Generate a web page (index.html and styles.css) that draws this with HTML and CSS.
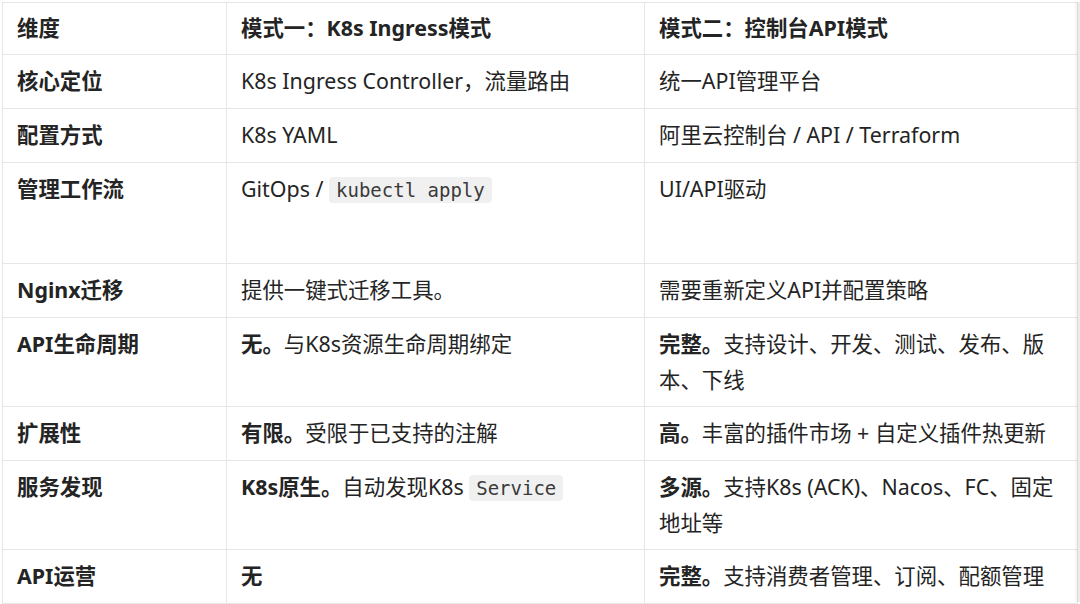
FILE: index.html
```html
<!DOCTYPE html>
<html lang="zh-CN">
<head>
<meta charset="utf-8">
<link rel="stylesheet" href="styles.css">
</head>
<body>
<div class="wrap">
<table class="cmp">
<colgroup><col class="c1"><col class="c2"><col class="c3"></colgroup>
<thead>
<tr><th>维度</th><th>模式一：K8s Ingress模式</th><th>模式二：控制台API模式</th></tr>
</thead>
<tbody>
<tr><td class="k">核心定位</td><td>K8s Ingress Controller，流量路由</td><td>统一API管理平台</td></tr>
<tr><td class="k">配置方式</td><td>K8s YAML</td><td>阿里云控制台 / API / Terraform</td></tr>
<tr class="tall"><td class="k">管理工作流</td><td>GitOps / <code>kubectl apply</code></td><td>UI/API驱动</td></tr>
<tr><td class="k">Nginx迁移</td><td>提供一键式迁移工具。</td><td>需要重新定义API并配置策略</td></tr>
<tr><td class="k">API生命周期</td><td><b>无。</b>与K8s资源生命周期绑定</td><td><b>完整。</b>支持设计、开发、测试、发布、版本、下线</td></tr>
<tr><td class="k">扩展性</td><td><b>有限。</b>受限于已支持的注解</td><td><b>高。</b>丰富的插件市场 + 自定义插件热更新</td></tr>
<tr><td class="k">服务发现</td><td><b>K8s原生。</b>自动发现K8s <code>Service</code></td><td><b>多源。</b>支持K8s (ACK)、Nacos、FC、固定地址等</td></tr>
<tr><td class="k">API运营</td><td><b>无</b></td><td><b>完整。</b>支持消费者管理、订阅、配额管理</td></tr>
</tbody>
</table>
</div>
</body>
</html>
```
FILE: styles.css
```css
html, body {
  margin: 0;
  padding: 0;
  background: #ffffff;
}
body {
  padding: 2px 0 0 2px;
  font-family: "Noto Sans", "Noto Sans CJK SC", sans-serif;
  color: #242424;
}
.wrap {
  position: relative;
  width: 1075px;
}
.wrap::after {
  content: "";
  position: absolute;
  top: 0;
  right: -4px;
  width: 6px;
  height: 600px;
  background: linear-gradient(to right, rgba(0,0,0,0.02), rgba(0,0,0,0.10));
}
.cmp {
  border-collapse: collapse;
  table-layout: fixed;
  width: 1075px;
  font-size: 21.4px;
  line-height: 36px;
}
.c1 { width: 224px; }
.c2 { width: 418px; }
.c3 { width: 433px; }
.cmp th, .cmp td {
  border: 1px solid #e6e6e6;
  padding: 8px 14px;
  text-align: left;
  vertical-align: top;
}
.cmp td {
  height: 37px;
}
.cmp th {
  font-weight: 700;
  padding: 7px 14px 8px;
}
.cmp td.k {
  font-weight: 700;
}
.cmp b {
  font-weight: 700;
}
.cmp .tall td {
  height: 84px;
}
code {
  font-family: "DejaVu Sans Mono", "Liberation Mono", monospace;
  font-size: 19px;
  background: #f0f0f0;
  border-radius: 4px;
  padding: 2px 7px;
  color: #3a3a3a;
}
```
